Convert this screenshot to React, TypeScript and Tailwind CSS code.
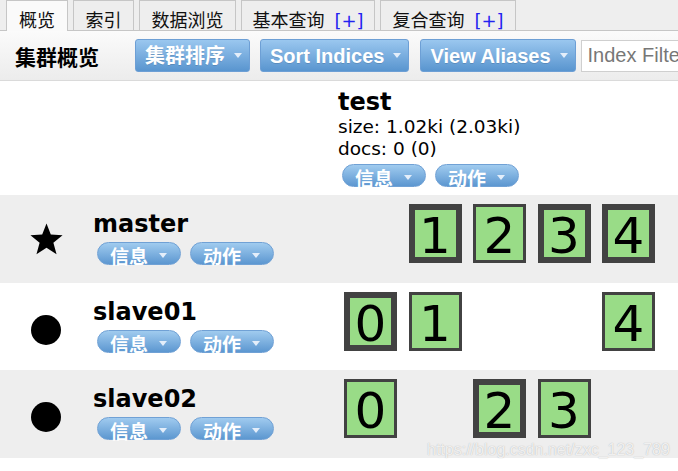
import React from 'react';

type Shard = { n: number; primary: boolean } | null;

const sans = '[font-family:"DejaVu_Sans","Noto_Sans_CJK_SC",sans-serif]';

const Caret = () => (
  <span className="inline-block shrink-0 w-0 h-0 border-l-[4.5px] border-r-[4.5px] border-t-[5px] border-l-transparent border-r-transparent border-t-[#e4eefa]" />
);

const ToolButton = ({ label }: { label: string }) => (
  <button className="shrink-0 flex items-center h-[33px] pl-[9px] pr-[7px] gap-[9px] rounded-[3px] border border-[#6d9fd5] bg-linear-to-b from-[#9ac7ef] to-[#5995cf] text-white font-bold text-[20px] leading-[24px] whitespace-nowrap [font-family:'Liberation_Sans','Noto_Sans_CJK_SC',sans-serif] [text-shadow:0_1px_0_rgba(0,0,0,0.12)]">
    <span>{label}</span>
    <Caret />
  </button>
);

const Pill = ({ label }: { label: string }) => (
  <div className="shrink-0 flex items-center box-border h-[23px] w-[84px] pt-[4px] pl-[12px] pr-[13px] gap-[11px] rounded-full border border-[#70a1d5] bg-linear-to-b from-[#a0cbef] to-[#5c97d0] text-white font-bold text-[19px] leading-[23px] [font-family:'Noto_Sans_CJK_SC',sans-serif]">
    <span className="whitespace-nowrap">{label}</span>
    <Caret />
  </div>
);

const ShardBox = ({ shard }: { shard: Shard }) => {
  if (!shard) return <div className="w-[64.5px] shrink-0" />;
  return (
    <div className="w-[64.5px] shrink-0">
      <div
        className={
          'box-border w-[53px] h-[59px] pt-[5px] flex items-center justify-center bg-[#99dc87] border-[#424242] text-black text-[50px] leading-[50px] ' +
          (shard.primary ? 'border-[6px]' : 'border-[3px]')
        }
      >
        {shard.n}
      </div>
    </div>
  );
};

const Star = () => (
  <svg width="35" height="33" viewBox="0 0 24 23">
    <polygon points="12,0.3 15,8.1 23.2,8.5 16.8,13.7 19,21.8 12,17.2 5,21.8 7.2,13.7 0.8,8.5 9,8.1" fill="#000" />
  </svg>
);

const NodeRow = ({
  name,
  master,
  shards,
  bg,
  h,
}: {
  name: string;
  master?: boolean;
  shards: Shard[];
  bg: string;
  h: string;
}) => (
  <div className={`flex ${bg} ${h}`}>
    <div className="w-[93px] shrink-0 flex items-center justify-center pr-[1px]">
      {master ? <Star /> : <div className="w-[30px] h-[30px] rounded-full bg-black mt-[6px]" />}
    </div>
    <div className="w-[245px] shrink-0 pt-[15px]">
      <div className="text-[24px] leading-[28px] font-bold text-black">{name}</div>
      <div className="flex gap-[9px] mt-[4px] ml-[4px]">
        <Pill label="信息" />
        <Pill label="动作" />
      </div>
    </div>
    <div className="flex pl-[6px] pt-[9px]">
      {shards.map((s, i) => (
        <ShardBox key={i} shard={s} />
      ))}
    </div>
  </div>
);

export default function App() {
  const tabs = [
    { label: '概览', w: 'w-[62px]', active: true },
    { label: '索引', w: 'w-[61px]' },
    { label: '数据浏览', w: 'w-[97px]' },
    { label: '基本查询', w: 'w-[134px]', plus: true },
    { label: '复合查询', w: 'w-[136px]', plus: true },
  ];

  return (
    <div className={`relative w-full h-[471px] overflow-hidden bg-white ${sans}`}>
      {/* tabs */}
      <div className="flex items-end h-[31px] bg-[#eeeeee] border-b border-[#c6c6c6] pl-[6px] gap-[5px]">
        {tabs.map((t) => (
          <div
            key={t.label}
            className={
              `${t.w} shrink-0 flex justify-center box-border border border-b-0 border-[#c6c6c6] pt-[7px] text-[18px] leading-[22px] text-[#111] [font-family:'Noto_Sans_CJK_SC',sans-serif] ` +
              (t.active ? 'h-[31px] -mb-px bg-[#fafafa]' : 'h-[30px] bg-[#eeeeee]')
            }
          >
            <span className="whitespace-nowrap">
              {t.label}
              {t.plus && <span className="ml-[10px] text-[#2323f0] [font-family:'DejaVu_Sans',sans-serif]">[+]</span>}
            </span>
          </div>
        ))}
      </div>

      {/* toolbar */}
      <div className="flex items-center h-[50px] bg-linear-to-b from-[#fbfbfb] to-[#ececec] border-b border-[#dadada] overflow-hidden">
        <div className="w-[135px] shrink-0 pl-[15px] text-[21px] font-bold text-black leading-[26px] whitespace-nowrap [font-family:'Noto_Sans_CJK_SC',sans-serif]">
          集群概览
        </div>
        <ToolButton label="集群排序" />
        <div className="ml-[10px] shrink-0">
          <ToolButton label="Sort Indices" />
        </div>
        <div className="ml-[11px] shrink-0">
          <ToolButton label="View Aliases" />
        </div>
        <input
          placeholder="Index Filter"
          className="ml-[5px] shrink-0 w-[200px] h-[32px] px-[6px] bg-white border border-[#cfcfcf] text-[20px] placeholder:text-[#777] [font-family:'Liberation_Sans',sans-serif]"
        />
      </div>

      {/* index header */}
      <div className="flex h-[114px] bg-white">
        <div className="w-[338px] shrink-0" />
        <div className="pt-[7px]">
          <div className="text-[24px] leading-[28px] font-bold text-black">test</div>
          <div className="text-[18.5px] leading-[22px] text-black">size: 1.02ki (2.03ki)</div>
          <div className="text-[18.5px] leading-[22px] text-black">docs: 0 (0)</div>
          <div className="flex gap-[9px] mt-[4px] ml-[4px]">
            <Pill label="信息" />
            <Pill label="动作" />
          </div>
        </div>
      </div>

      <NodeRow
        name="master"
        master
        bg="bg-[#eeeeee]"
        h="h-[88px]"
        shards={[null, { n: 1, primary: true }, { n: 2, primary: false }, { n: 3, primary: true }, { n: 4, primary: true }]}
      />
      <NodeRow
        name="slave01"
        bg="bg-white"
        h="h-[87px]"
        shards={[{ n: 0, primary: true }, { n: 1, primary: false }, null, null, { n: 4, primary: false }]}
      />
      <NodeRow
        name="slave02"
        bg="bg-[#eeeeee]"
        h="h-[88px]"
        shards={[{ n: 0, primary: false }, null, { n: 2, primary: true }, { n: 3, primary: false }, null]}
      />

      <div className="absolute left-[427px] top-[441px] text-[16px] leading-[18px] text-white/80 [font-family:'Liberation_Sans',sans-serif] [text-shadow:0_0_1px_rgba(120,120,120,0.6)]">
        https://blog.csdn.net/zxc_123_789
      </div>
    </div>
  );
}
